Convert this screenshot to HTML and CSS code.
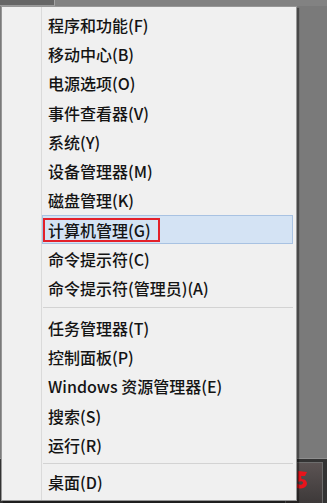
FILE: index.html
```html
<!DOCTYPE html>
<html lang="zh-CN">
<head>
<meta charset="utf-8">
<title>Win+X 菜单</title>
<link rel="stylesheet" href="styles.css">
</head>
<body>
<div class="screen">
  <div class="desktop">
    <div class="topbar"><div class="tab"></div></div>
    <div class="fill"></div>
    <div class="taskbar">
      <div class="tb-icon">
        <svg width="38" height="41" viewBox="0 0 38 41">
          <path d="M13 9 L22 10 L20 14 L16 14 L16.5 17 C21 17 23 20.5 21.5 23.5 C19.5 27 14 27.5 11 25 L12.5 21.5 C14.5 23.5 17.5 23 18 21 C18.3 19.2 15.5 18.6 13 19.8 Z" fill="#e8141c"/>
        </svg>
      </div>
    </div>
  </div>
  <div class="menu">
    <div class="gutter"></div>
    <ul class="items">
      <li class="item">程序和功能(F)</li>
      <li class="item">移动中心(B)</li>
      <li class="item">电源选项(O)</li>
      <li class="item">事件查看器(V)</li>
      <li class="item">系统(Y)</li>
      <li class="item">设备管理器(M)</li>
      <li class="item">磁盘管理(K)</li>
      <li class="item active"><span class="mark">计算机管理(G)</span></li>
      <li class="item">命令提示符(C)</li>
      <li class="item">命令提示符(管理员)(A)</li>
      <li class="sep sep-a"></li>
      <li class="item">任务管理器(T)</li>
      <li class="item">控制面板(P)</li>
      <li class="item">Windows 资源管理器(E)</li>
      <li class="item">搜索(S)</li>
      <li class="item">运行(R)</li>
      <li class="sep sep-b"></li>
      <li class="item">桌面(D)</li>
    </ul>
  </div>
</div>
</body>
</html>
```
FILE: styles.css
```css
html, body {
  margin: 0;
  padding: 0;
  background: #7b7b7b;
}

.screen {
  position: relative;
  width: 327px;
  height: 503px;
  overflow: hidden;
  font-family: "Noto Sans CJK SC", "Noto Sans", sans-serif;
}

.desktop {
  display: flex;
  flex-direction: column;
  height: 100%;
}

.topbar {
  height: 6px;
  background: #828282;
  display: flex;
}

.tab {
  width: 54px;
  height: 5px;
  background: #666;
  border-right: 1px solid #a4a4a4;
  border-bottom: 1px solid #9a9a9a;
}

.fill {
  flex: 1;
  background: #7a7a7a;
}

.taskbar {
  height: 44px;
  border-top: 1px solid #8e8e8e;
  background: #333;
  display: flex;
  justify-content: flex-end;
  align-items: flex-end;
  padding-right: 4px;
}

.tb-icon {
  width: 38px;
  height: 41px;
  box-sizing: border-box;
  border: 1px solid #6d6d6d;
  border-bottom: none;
  background: linear-gradient(#5b5353, #3d3939);
  display: flex;
}

.tb-icon svg {
  display: block;
  margin: -1px;
}

.menu {
  position: absolute;
  left: 1px;
  top: 6px;
  width: 296px;
  box-sizing: border-box;
  display: flex;
  background: #f0f0f0;
  border: 1px solid #979797;
  box-shadow: 2px 2px 1px rgba(0, 0, 0, 0.4);
}

.gutter {
  width: 39px;
  border-right: 1px solid #dadada;
  flex: none;
}

.items {
  flex: 1;
  list-style: none;
  margin: 0;
  padding: 3px 3px 3px 0;
}

.item {
  height: 29.3px;
  box-sizing: border-box;
  border: 1px solid transparent;
  padding-left: 5px;
  display: flex;
  align-items: center;
  font-size: 16px;
  font-weight: 500;
  color: #141414;
  white-space: nowrap;
}

.item.active {
  background: #d4e3f4;
  border-color: #a8c2e2;
  padding-left: 0;
}

.mark {
  height: 24px;
  box-sizing: border-box;
  border: 2px solid #e3202a;
  padding: 0 7px 0 3px;
  display: flex;
  align-items: center;
}

.sep {
  display: flex;
  align-items: center;
}

.sep::before {
  content: "";
  flex: 1;
  height: 1px;
  background: #d3d3d3;
  margin-left: 1px;
}

.sep-a {
  height: 10px;
}

.sep-b {
  height: 8px;
}
```
